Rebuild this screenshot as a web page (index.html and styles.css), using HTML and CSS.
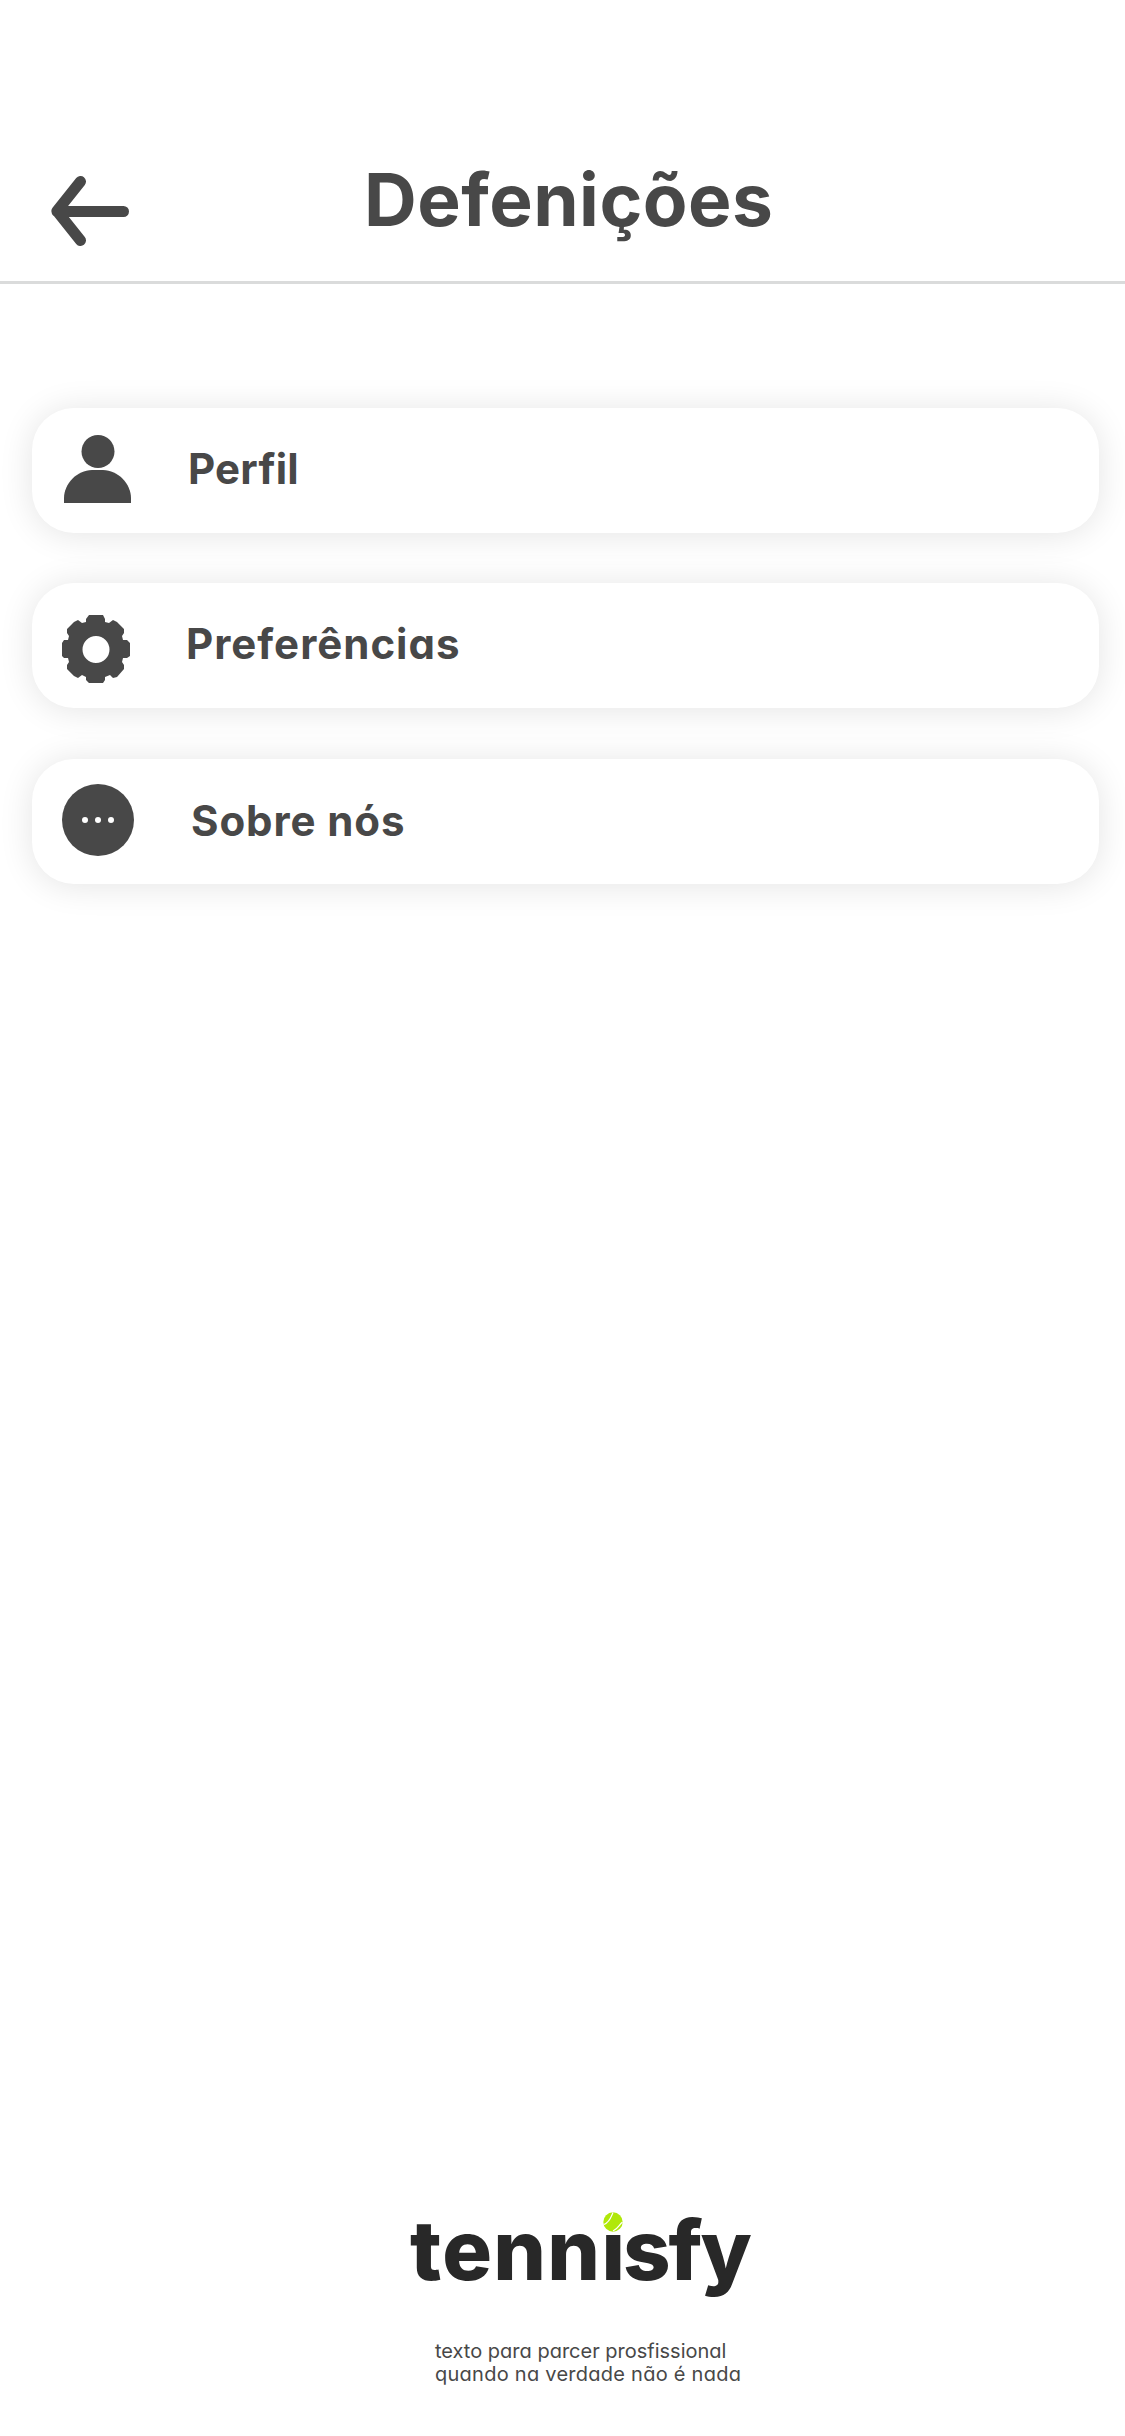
FILE: index.html
```html
<!DOCTYPE html>
<html lang="pt">
<head>
<meta charset="utf-8">
<title>Defenições</title>
<link rel="stylesheet" href="styles.css">
</head>
<body>
<header class="header">
  <svg class="back" viewBox="0 0 78 70"><path d="M29.500 5.500L6 35L29.500 64.500M6 35.500H72.500"/></svg>
  <h1 class="title">Defenições</h1>
</header>
<main class="menu">
  <a class="card">
    <svg class="icon" viewBox="0 0 72 72"><circle cx="34" cy="16.500" r="16.500"/><path d="M0 68V63C0 49 13 35 28 35H39C54 35 67 49 67 63V68Z"/></svg>
    <span class="label label-profile">Perfil</span>
  </a>
  <a class="card">
    <svg class="icon icon-gear" viewBox="0 0 68 68"><path fill-rule="evenodd" d="M27 0H41L43 4V7L47 8L51 5L55 7L62 14V18L60 21L61 25H65L68 28V41L65 43H61L60 47L62 50V54L55 62L51 63L48 60L43 62V65L41 68H27L24 65V62L20 60L16 63L12 61L5 54V50L7 47L6 43H2L0 41V28L2 25H6L7 21L5 18V14L12 7L16 5L20 8L24 7V4ZM34 21A13.500 13.500 0 1 0 34 48A13.500 13.500 0 1 0 34 21Z"/></svg>
    <span class="label label-prefs">Preferências</span>
  </a>
  <a class="card card-last">
    <svg class="icon icon-more" viewBox="0 0 72 72"><circle cx="36" cy="36" r="36"/><g fill="#fff"><circle cx="23" cy="36" r="3"/><circle cx="36" cy="36" r="3"/><circle cx="49" cy="36" r="3"/></g></svg>
    <span class="label label-about">Sobre nós</span>
  </a>
</main>
<footer class="footer">
  <div class="logo"><span class="logo-start">tenn</span><span class="logo-end">isfy</span>
    <svg class="ball" viewBox="0 0 28 26"><path d="M0 0H28V26H0Z" fill="#fff"/><circle cx="14" cy="14" r="9.700" fill="#b0e80a"/><path d="M14 4.500C12 9 11 14 5 16.500M23.500 14C19 18 20 20 14 23" fill="none" stroke="#fff" stroke-width="1.200"/></svg>
  </div>
  <p class="tagline">texto para parcer prosfissional<br><span class="tagline-end">quando na verdade não é nada</span></p>
</footer>
</body>
</html>
```
FILE: styles.css
```css
* { box-sizing: border-box; }
body {
  margin: 0;
  min-height: 2436px;
  display: flex;
  flex-direction: column;
  background: #fff;
  color: #484848;
  font-family: Inter, "Noto Sans", sans-serif;
  font-feature-settings: "cv11";
}
.header {
  display: flex;
  align-items: flex-start;
  height: 284px;
  padding: 156px 0 0 51px;
  border-bottom: 3px solid #dadbdb;
}
.back {
  width: 78px;
  height: 70px;
  margin-top: 20px;
  fill: none;
  stroke: #484848;
  stroke-width: 11;
  stroke-linecap: round;
  stroke-linejoin: round;
}
.title {
  margin: 0 0 0 235px;
  font-size: 73px;
  line-height: 88px;
  font-weight: 700;
  letter-spacing: 0.5px;
}
.menu {
  display: flex;
  flex-direction: column;
  gap: 50px;
  padding: 124px 26px 0 32px;
}
.card {
  display: flex;
  height: 125px;
  padding-left: 32px;
  border-radius: 42px;
  background: #fff;
  box-shadow: 0 2px 34px rgba(0, 0, 0, 0.11);
}
.card-last { margin-top: 1px; }
.icon {
  width: 72px;
  height: 72px;
  margin-top: 27px;
  fill: #484848;
}
.icon-gear { width: 68px; height: 68px; margin: 32px 6px 0 -2px; }
.icon-more { margin: 25px 2px 0 -2px; }
.label {
  margin: 36px 0 0 52px;
  font-size: 42px;
  line-height: 50px;
  font-weight: 700;
  letter-spacing: 0.2px;
}
.label-prefs { margin-left: 50px; letter-spacing: 1px; }
.label-about { margin: 37px 0 0 55px; letter-spacing: 0.9px; }
.footer { margin-top: auto; padding: 0 0 50px 410px; }
.logo {
  position: relative;
  width: 345px;
  color: #282828;
  font-size: 83px;
  line-height: 100px;
  font-weight: 800;
}
.logo-start { letter-spacing: 1.3px; }
.logo-end { letter-spacing: -2px; }
.ball { position: absolute; left: 189px; top: 8px; width: 28px; height: 26px; }
.tagline {
  margin: 40px 0 0 25px;
  font-size: 20px;
  line-height: 23px;
}
.tagline-end { letter-spacing: 0.26px; }
```
